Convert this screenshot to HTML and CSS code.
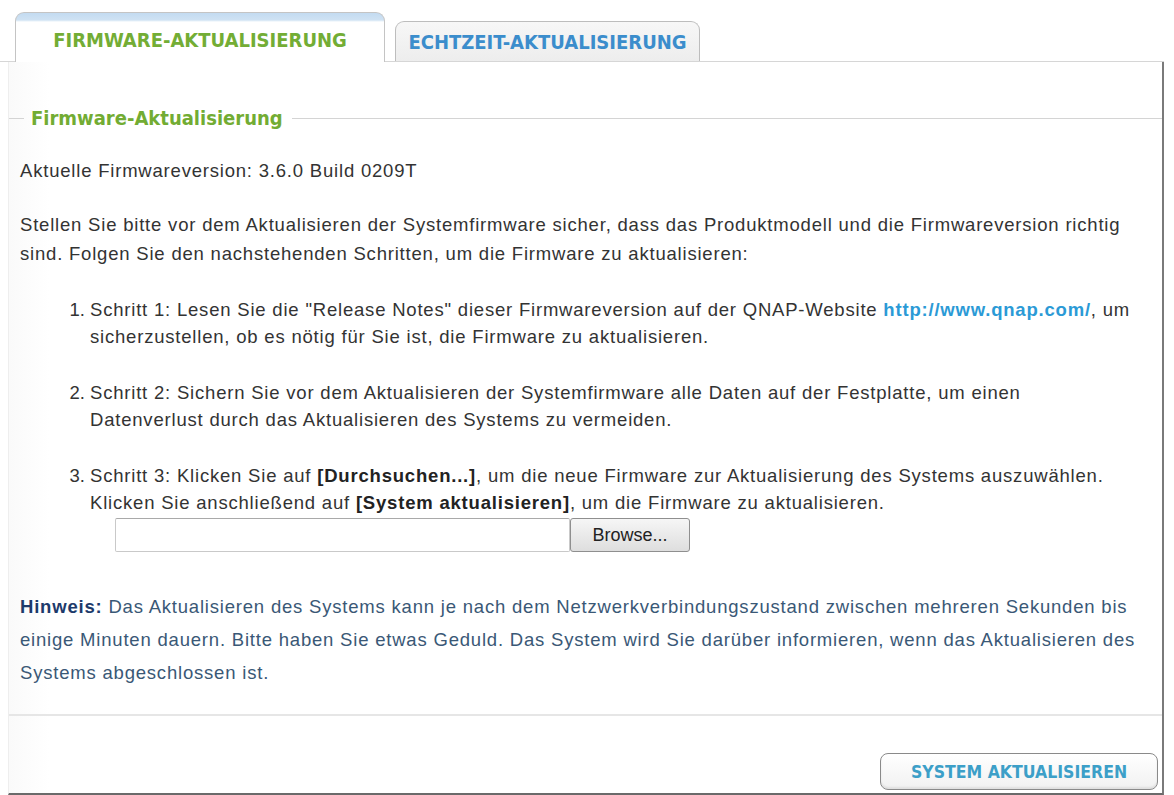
FILE: index.html
```html
<!DOCTYPE html>
<html lang="de">
<head>
<meta charset="utf-8">
<title>Firmware-Aktualisierung</title>
<link rel="stylesheet" href="styles.css">
</head>
<body>
<div class="window">
  <div class="tabs">
    <div class="tab tab-active">FIRMWARE-AKTUALISIERUNG</div>
    <div class="tab tab-idle">ECHTZEIT-AKTUALISIERUNG</div>
  </div>
  <div class="panel">
    <div class="legend-row">
      <span class="legend-line short"></span>
      <span class="legend-text">Firmware-Aktualisierung</span>
      <span class="legend-line long"></span>
    </div>

    <p class="version">Aktuelle Firmwareversion: 3.6.0 Build 0209T</p>

    <p class="intro">Stellen Sie bitte vor dem Aktualisieren der Systemfirmware sicher, dass das Produktmodell und die Firmwareversion richtig sind. Folgen Sie den nachstehenden Schritten, um die Firmware zu aktualisieren:</p>

    <ol class="steps">
      <li>Schritt 1: Lesen Sie die "Release Notes" dieser Firmwareversion auf der QNAP-Website <a class="link" href="#">http://www.qnap.com/</a>, um sicherzustellen, ob es nötig für Sie ist, die Firmware zu aktualisieren.</li>
      <li>Schritt 2: Sichern Sie vor dem Aktualisieren der Systemfirmware alle Daten auf der Festplatte, um einen Datenverlust durch das Aktualisieren des Systems zu vermeiden.</li>
      <li>Schritt 3: Klicken Sie auf <b>[Durchsuchen...]</b>, um die neue Firmware zur Aktualisierung des Systems auszuwählen. Klicken Sie anschließend auf <b>[System aktualisieren]</b>, um die Firmware zu aktualisieren.</li>
    </ol>

    <div class="file-row">
      <span class="file-field"></span>
      <span class="browse">Browse...</span>
    </div>

    <p class="note"><b class="note-label">Hinweis:</b> Das Aktualisieren des Systems kann je nach dem Netzwerkverbindungszustand zwischen mehreren Sekunden bis einige Minuten dauern. Bitte haben Sie etwas Geduld. Das System wird Sie darüber informieren, wenn das Aktualisieren des Systems abgeschlossen ist.</p>

    <div class="footer">
      <span class="action">SYSTEM AKTUALISIEREN</span>
    </div>
  </div>
</div>
</body>
</html>
```

FILE: styles.css
```css
html, body {
  margin: 0;
  padding: 0;
  background: #ffffff;
}

.window {
  width: 1164px;
  height: 795px;
  display: flex;
  flex-direction: column;
  font-family: "Liberation Sans", Arial, sans-serif;
  color: #333333;
}

/* tab strip */
.tabs {
  height: 62px;
  box-sizing: border-box;
  padding-left: 15px;
  display: flex;
  align-items: flex-end;
  gap: 10px;
  border-bottom: 1px solid #d6d6d6;
  flex: none;
}

.tab {
  box-sizing: border-box;
  display: flex;
  align-items: center;
  justify-content: center;
  font-family: "DejaVu Sans Condensed", "DejaVu Sans", sans-serif;
  font-stretch: condensed;
  font-weight: bold;
  font-size: 20px;
  border: 1px solid #c4c4c4;
  border-bottom: none;
  border-radius: 9px 9px 0 0;
}

.tab-active {
  width: 370px;
  height: 50px;
  margin-bottom: -1px;
  color: #73ad35;
  background: linear-gradient(#c3dbf1 0, #cfe2f3 7px, #ffffff 9px, #ffffff 100%);
  padding-top: 4px;
}

.tab-idle {
  width: 305px;
  height: 40px;
  color: #3b8dcc;
  background: linear-gradient(#f7f7f7, #ededed);
  border-color: #bdbdbd;
}

/* content panel */
.panel {
  flex: 1;
  margin-left: 8px;
  border-left: 1px solid #eeeeee;
  border-right: 2px solid #7a7a7a;
  border-bottom: 2px solid #6a6a6a;
  display: flex;
  flex-direction: column;
  background: linear-gradient(90deg, #fafafa 0, #ffffff 40px, #ffffff 100%);
}

.legend-row {
  display: flex;
  align-items: center;
  margin-top: 43px;
  height: 26px;
}

.legend-line {
  height: 1px;
  background: #d4d4d4;
}

.legend-line.short {
  width: 15px;
}

.legend-line.long {
  flex: 1;
}

.legend-text {
  padding: 0 9px 0 7px;
  font-family: "DejaVu Sans Condensed", "DejaVu Sans", sans-serif;
  font-stretch: condensed;
  font-weight: bold;
  font-size: 20px;
  color: #72ac33;
}

.version,
.intro,
.steps,
.note {
  font-size: 18.5px;
  letter-spacing: 0.8px;
  line-height: 29px;
}

.version {
  margin: 25px 0 0 11px;
}

.intro {
  margin: 25px 12px 0 11px;
}

.steps {
  margin: 28px 27px 0 0;
  padding-left: 81px;
  display: flex;
  flex-direction: column;
  gap: 29px;
  line-height: 27px;
}

.steps li::marker {
  letter-spacing: 0;
}

.steps b {
  color: #222222;
}

.link {
  color: #2b9ad6;
  font-weight: bold;
  text-decoration: none;
}

.file-row {
  display: flex;
  margin: 2px 0 0 106px;
  height: 34px;
}

.file-field {
  width: 455px;
  box-sizing: border-box;
  border: 1px solid #c9c9c9;
  border-top-color: #a9a9a9;
  border-radius: 2px;
  background: #ffffff;
}

.browse {
  width: 120px;
  box-sizing: border-box;
  display: flex;
  align-items: center;
  justify-content: center;
  border: 1px solid #8f8f8f;
  border-radius: 3px;
  background: linear-gradient(#f6f6f6, #dedede);
  font-size: 18px;
  color: #222222;
}

.note {
  margin: 38px 12px 0 11px;
  line-height: 33px;
  color: #3a5876;
}

.note-label {
  color: #1d3a6b;
}

.footer {
  margin-top: auto;
  height: 79px;
  box-sizing: border-box;
  border-top: 2px solid #e6e6e6;
  display: flex;
  align-items: flex-end;
  justify-content: flex-end;
  padding: 0 4px 3px 0;
}

.action {
  width: 278px;
  height: 37px;
  box-sizing: border-box;
  display: flex;
  align-items: center;
  justify-content: center;
  border: 1px solid #8a8a8a;
  border-radius: 8px;
  background: linear-gradient(#ffffff, #f1f1f1);
  box-shadow: inset 0 -2px 2px rgba(0, 0, 0, 0.08);
  font-family: "DejaVu Sans Condensed", "DejaVu Sans", sans-serif;
  font-stretch: condensed;
  font-weight: bold;
  font-size: 17.5px;
  color: #3c9fc8;
}
```
